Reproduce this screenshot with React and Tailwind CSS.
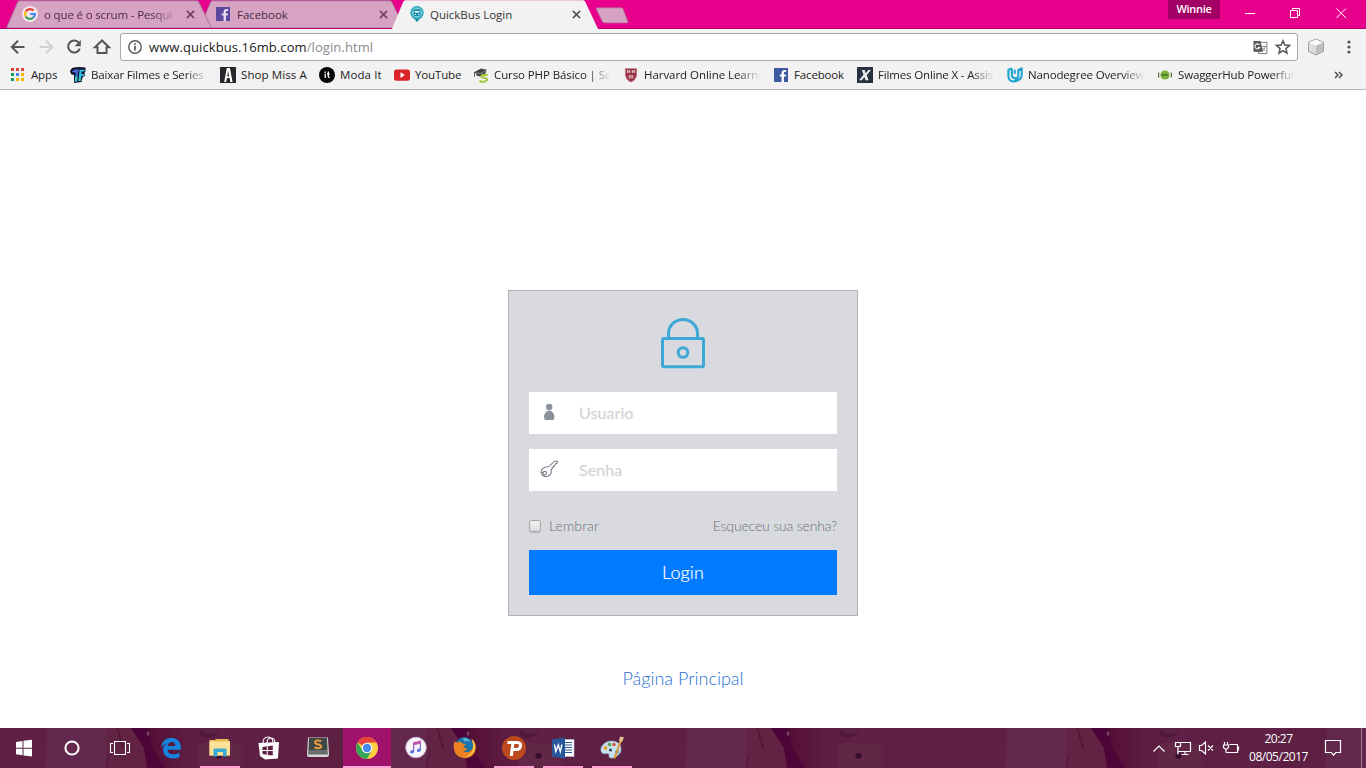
import React from "react";

const UI = "font-['Open_Sans','Noto_Sans',sans-serif]";
const FADE = "[mask-image:linear-gradient(to_right,black_80%,transparent)]";

function GoogleG({ className }) {
  return (
    <svg viewBox="0 0 16 16" className={className}>
      <circle cx="8" cy="8" r="8" fill="#f3e4ee" />
      <g fill="none" strokeWidth="2.1">
        <path d="M11.5 4.6A4.9 4.9 0 0 0 3.7 5.6" stroke="#ea4335" />
        <path d="M3.7 5.6a4.9 4.9 0 0 0 0 4.8" stroke="#fbbc05" />
        <path d="M3.7 10.4a4.9 4.9 0 0 0 7.6 1.2" stroke="#34a853" />
        <path d="M11.3 11.6A4.9 4.9 0 0 0 12.9 8H8.2" stroke="#4285f4" />
      </g>
    </svg>
  );
}

function FacebookIcon({ color = "#3f5ba0", paper = "#fff", className }) {
  return (
    <svg viewBox="0 0 14 14" className={className}>
      <rect width="14" height="14" fill={color} />
      <path d="M7.6 14V8.6H5.8V6.5h1.8V5c0-1.9 1.1-2.9 2.8-2.9h1.7v2h-1.1c-.9 0-1.1.4-1.1 1.1v1.3h2.1l-.3 2.1H9.9V14z" fill={paper} />
    </svg>
  );
}

function BusPin({ className }) {
  return (
    <svg viewBox="0 0 14 16" className={className}>
      <path d="M7 16 2.800 11h8.400z" fill="#13809a" />
      <circle cx="7" cy="6.800" r="6.700" fill="#2aa5bb" />
      <circle cx="7" cy="6.600" r="5.100" fill="#7fd0da" />
      <rect x="3.600" y="3.200" width="6.800" height="6.800" rx="1.200" fill="#168aa3" />
      <path d="M4.600 5h4.800v1.700H4.600z" fill="#d6f5f6" />
      <path d="M4.600 8.500h1.200M8.200 8.500h1.200" stroke="#fff" />
    </svg>
  );
}

function TabShape({ fill, stroke }) {
  return (
    <svg viewBox="0 0 206 28" preserveAspectRatio="none" className="absolute inset-0 h-full w-full">
      <path d="M.5 28 11.7 2Q12.3.8 13.500.8H191Q192.200.8 192.800 2L205.500 28z" fill={fill} stroke={stroke} strokeWidth="1" />
    </svg>
  );
}

function Cross({ color }) {
  return (
    <svg viewBox="0 0 9 9" className="h-[9px] w-[9px] shrink-0">
      <path d="M.9.9 8.1 8.1M8.1.9.9 8.1" stroke={color} strokeWidth="1.6" />
    </svg>
  );
}

function Tab({ active, className, icon, title, titleClass = "" }) {
  return (
    <div className={"relative w-[206px] shrink-0 " + className}>
      <TabShape fill={active ? "#f2f2f2" : "#d6a3c3"} stroke={active ? "#f2f2f2" : "#a9709a"} />
      <div className="relative flex h-[29px] items-center pr-[17px] pb-px pl-[16px]">
        <span className="flex w-[22px] shrink-0">{icon}</span>
        <span className={"flex-1 pt-px text-[11.5px] leading-5 whitespace-nowrap " + (active ? "text-[#333]" : "text-[#4c2d42]") + " " + titleClass}>{title}</span>
        <span className="flex w-[17px] shrink-0 justify-end pt-px"><Cross color={active ? "#555" : "#6e3f5d"} /></span>
      </div>
    </div>
  );
}

function TabStrip() {
  return (
    <div className="flex h-[29px] items-start border-b border-[#b20070] bg-[#e6008c] pl-[6px]">
      <Tab className="z-10 h-7" icon={<GoogleG className="h-4 w-4" />} title="o que é o scrum - Pesqui" titleClass={"tracking-[-0.15px] " + FADE} />
      <Tab className="-ml-[13px] h-7" icon={<FacebookIcon color="#5a4a9d" paper="#eadcf0" className="ml-px h-[14px] w-[14px]" />} title="Facebook" titleClass="tracking-[-0.05px]" />
      <Tab active className="z-20 -ml-[13px] h-[29px]" icon={<BusPin className="ml-[2px] h-4 w-[14px]" />} title="QuickBus Login" titleClass="tracking-[-0.02px]" />
      <svg viewBox="0 0 34 17" className="mt-[7px] -ml-[3px] h-[17px] w-[34px]">
        <path d="M2 .8h24.5q1 0 1.5 1l5 13q.3 1.2-.8 1.2H9.500Q8 16 7.300 14.600L1.300 2Q1 .8 2 .8z" fill="#d6a3c3" stroke="#bb5e98" strokeWidth=".8" />
      </svg>
      <div className="ml-auto flex">
        <div className="h-[19px] w-[52px] bg-[#a20065] text-center text-[11px] leading-[18px] font-semibold tracking-[-0.3px] text-white">Winnie</div>
        <svg viewBox="0 0 146 28" className="h-7 w-[146px]" fill="none" stroke="#fff">
          <path d="M25 13.500h10M70.500 10.500h7v7h-7zM72.500 10.500v-2h7v7h-2M116.500 8.500l9.500 9.500M126 8.500l-9.500 9.500" />
        </svg>
      </div>
    </div>
  );
}

function Toolbar() {
  return (
    <div className="flex h-9 items-center bg-[#f2f2f2]">
      <svg viewBox="0 0 120 36" className="h-9 w-[120px]" fill="none" stroke="#555" strokeWidth="2">
        <path d="M24.500 18H12.500M18 11.700 11.800 18l6.200 6.300" />
        <path d="M39.500 18h12M46 11.700l6.200 6.300-6.200 6.300" stroke="#d0d0d0" />
        <path d="M79 14A6 6 0 1 0 79.800 19.600" />
        <path d="M80.800 11v6.200h-6.200z" fill="#555" stroke="none" />
        <path d="M102 11.500 95 18.300h2.500V24h9v-5.700h2.500z" />
      </svg>
      <div className="flex h-7 w-[1178px] items-center rounded-[3px] border border-[#a8a8a8] bg-white pl-[7px]">
        <svg viewBox="0 0 14 14" className="h-[14px] w-[14px]">
          <circle cx="7" cy="7" r="6.200" fill="none" stroke="#555" strokeWidth="1.400" />
          <path d="M7 6v4.500M7 3.300v1.600" stroke="#555" strokeWidth="1.700" />
        </svg>
        <span className="ml-[7px] pt-px text-[13px] tracking-[0.09px] whitespace-nowrap text-[#222]">www.quickbus.16mb.com<span className="text-[#8b8b8b]">/login.html</span></span>
        <svg viewBox="0 0 16 16" className="ml-auto h-[15px] w-[15px]">
          <rect x="6" y="2.500" width="8.800" height="12" fill="#fff" stroke="#777" />
          <path d="M.5 1h7.300l3 11.500H.5z" fill="#555" />
          <path d="M7 5.300A2.700 2.700 0 1 0 7.200 8H5" fill="none" stroke="#fff" strokeWidth="1.100" />
          <path d="M9.500 7h4.500M11.800 6v1M13.300 7q-1 3-3 4M10.300 8.500q1 2 3 3" fill="none" stroke="#777" strokeWidth=".8" />
        </svg>
        <svg viewBox="0 0 16 16" className="mr-[6px] ml-[7px] h-4 w-4">
          <path d="m8 1.800 1.800 4.300 4.700.4-3.600 3.100 1.100 4.600L8 11.700l-4 2.500 1.100-4.600L1.500 6.500l4.700-.4z" fill="none" stroke="#555" strokeWidth="1.500" />
        </svg>
      </div>
      <svg viewBox="0 0 18 18" className="ml-[9px] h-[18px] w-[18px]">
        <path d="m9 1 7.500 3.300v9L9 17l-7.500-3.700v-9z" fill="#dedede" stroke="#9c9c9c" />
        <path d="m9 1.500 7 3L9 7.800 2 4.500z" fill="#fafafa" />
        <path d="m9 8 7-3.500v8.700L9 16.500z" fill="#bebebe" />
      </svg>
      <svg viewBox="0 0 4 14" className="ml-[22px] h-[14px] w-1" fill="#555">
        <circle cx="2" cy="2" r="1.600" /><circle cx="2" cy="7" r="1.600" /><circle cx="2" cy="12" r="1.600" />
      </svg>
    </div>
  );
}

const ICON = "h-4 w-4 shrink-0";
const icons = {
  apps: (
    <svg viewBox="0 0 16 16" className={ICON}>
      <path d="M1 1h3v3H1zM6 1h3v3H6zM11 1h3v3h-3z" fill="#db4437" />
      <path d="M1 6h3v3H1z" fill="#0f9d58" /><path d="M6 6h3v3H6z" fill="#4285f4" /><path d="M11 6h3v3h-3z" fill="#f4b400" />
      <path d="M1 11h3v3H1z" fill="#0f9d58" /><path d="M6 11h3v3H6zM11 11h3v3h-3z" fill="#f4b400" />
    </svg>
  ),
  tf: (
    <svg viewBox="0 0 16 16" className={ICON}>
      <path d="M2 1Q8-.5 15.500.5v3.800l-1 1.200.5 3-2.500 2L11.500 15 4 16V8L1 7.200 0 4z" fill="#10162f" />
      <path d="M1.500 5Q4 1.500 9 2.500L8 4.500l-1 10H4.800L5.600 5.200z" fill="#4568dc" />
      <path d="M9.500 2.800h5v1.800H11.500v2.500H14v1.800h-2.500L10.500 14H8.500z" fill="#31bddf" />
      <path d="M4.900 13 5.300 9.500h2.100l-.4 5H4.800zM10.800 10.500H9l-.4 3.500h1.900z" fill="#3fd0c4" />
    </svg>
  ),
  miss: (
    <svg viewBox="0 0 16 16" className={ICON}>
      <rect width="16" height="16" fill="#29272d" />
      <path d="m6.800 1-2.600 14h1.900l.9-4h2.700l.6 4h2.300L9.900 1zm1.200 2.500 1.200 6H7.300z" fill="#fff" />
    </svg>
  ),
  it: (
    <svg viewBox="0 0 16 16" className={ICON}>
      <circle cx="8" cy="8" r="8" fill="#050505" />
      <path d="M6.200 6.800V11M6.200 4.500V6M9.300 4.500v5.200q0 .8 1.300.7M8 6.800h2.700" fill="none" stroke="#fff" strokeWidth="1.300" />
    </svg>
  ),
  youtube: (
    <svg viewBox="0 0 16 16" className={ICON}>
      <rect y="2.500" width="16" height="11.300" rx="2.500" fill="#d9252a" />
      <path d="m6.500 5.300 4.300 2.800-4.300 2.800z" fill="#fff" />
    </svg>
  ),
  php: (
    <svg viewBox="0 0 16 16" className={ICON}>
      <path d="m.5 5.500 7.500-4 5.500 1.300L12 7.500 6.500 9.500 3.500 8.500 3 6.500z" fill="#3c4144" />
      <path d="m3 6 5 .5 4.500-2.800" fill="none" stroke="#a6aaac" strokeWidth=".8" />
      <path d="M1.500 5.500v4.500" stroke="#555" strokeWidth=".9" />
      <path d="M14.800 8Q8 7.200 8.300 9.500q.2 1 3 1.200 3.500.5 2.500 2.700-1.500 2.100-7.500.8" fill="none" stroke="#a1c53b" strokeWidth="1.900" />
    </svg>
  ),
  harvard: (
    <svg viewBox="0 0 16 16" className={ICON}>
      <path d="M2.300 1.500h11.400v6.700q-.5 4.500-5.700 7-5.200-2.500-5.700-7z" fill="#9d3044" stroke="#c98d98" strokeWidth=".6" />
      <path d="M4 3.200h3.200v2.600H4zM8.800 3.200H12v2.600H8.800zM5.800 8.300h4.400v3H5.800z" fill="#ded3d4" />
      <path d="M5.600 3.200v2.600M10.400 3.200v2.600M8 8.300v3M5.800 9.800h4.400" stroke="#93404e" strokeWidth=".6" />
    </svg>
  ),
  facebook: <FacebookIcon className="mr-px ml-px h-[14px] w-[14px] shrink-0" />,
  x: (
    <svg viewBox="0 0 16 16" className={ICON}>
      <rect width="16" height="16" fill="#273241" />
      <path d="M4.800 3h3l.8 3.200L11.300 3H14l-4.200 5 1.700 5.200h-3l-1-3.300-2.700 3.300H2l4.500-5.400z" fill="#e5e9ed" />
    </svg>
  ),
  udacity: (
    <svg viewBox="0 0 16 16" className={ICON} fill="none" stroke="#1fa5d4" strokeWidth="2.100" strokeLinejoin="round">
      <path d="M4.800 1.400 1.400 3v6.300q.3 4.500 4.400 5.200 8.600-.5 8.900-6.500V1.400L11.300 3v5q-.1 4-4 6.300" />
      <path d="M4.800 1.400v6.300q.2 3.600 3.600 3.700 1.600 0 2.600-.8M7.800 2.800v4" />
    </svg>
  ),
  swagger: (
    <svg viewBox="0 0 16 16" className={ICON}>
      <circle cx="8" cy="8" r="4.600" fill="#7dae3e" />
      <path d="M5 8h6" stroke="#4a7425" strokeWidth="1.800" strokeDasharray="1.500 .5" />
      <path d="M2 5.500Q.9 8 2 10.500M14 5.500q1.100 2.500 0 5" stroke="#4b6335" strokeWidth="1.100" fill="none" />
    </svg>
  ),
};

const bookmarks = [
  { icon: "apps", text: "Apps", item: "w-[60px]" },
  { icon: "tf", text: "Baixar Filmes e Series", item: "w-[150px]", fade: true },
  { icon: "miss", text: "Shop Miss A", item: "w-[99px] tracking-[0.1px]" },
  { icon: "it", text: "Moda It", item: "w-[75px] tracking-[0.1px]" },
  { icon: "youtube", text: "YouTube", item: "w-[79px]" },
  { icon: "php", text: "Curso PHP Básico | Sch", item: "w-[150px] tracking-[-0.1px]", fade: true },
  { icon: "harvard", text: "Harvard Online Learni", item: "w-[150px] tracking-[-0.05px]", fade: true },
  { icon: "facebook", text: "Facebook", item: "w-[84px]" },
  { icon: "x", text: "Filmes Online X - Assis", item: "w-[150px]", fade: true },
  { icon: "udacity", text: "Nanodegree Overview", item: "w-[150px]", fade: true },
  { icon: "swagger", text: "SwaggerHub Powerful", item: "w-[150px]", fade: true },
];

function Bookmarks() {
  return (
    <div className="flex h-[25px] items-start border-b border-[#b6b4b6] bg-[#f2f2f2] pl-[10px] text-[11.5px] tracking-[-0.15px] text-[#222]">
      {bookmarks.map((b) => (
        <div key={b.text} className={"flex h-5 shrink-0 items-center gap-[5px] " + b.item}>
          {icons[b.icon]}
          <span className={"whitespace-nowrap " + (b.fade ? "w-[117px] " + FADE : "")}>{b.text}</span>
        </div>
      ))}
      <svg viewBox="0 0 9 8" className="mt-[6px] ml-[27px] h-2 w-[9px]" fill="none" stroke="#444" strokeWidth="1.400">
        <path d="M1 1l3 3-3 3M5 1l3 3-3 3" />
      </svg>
    </div>
  );
}

function Field({ icon, label }) {
  return (
    <div className="flex h-[42px] items-center bg-white">
      <span className="flex w-[50px] pb-[2px] pl-[11px]">{icon}</span>
      <span className="text-[16px] tracking-[0.08px] text-[#d6d6d6] [-webkit-text-stroke:0.3px_#d6d6d6]">{label}</span>
    </div>
  );
}

function LoginPage() {
  return (
    <div className="flex flex-1 flex-col items-center bg-white pt-[200px] font-['Lato',sans-serif]">
      <div className="flex h-[326px] w-[350px] flex-col border border-[#aeb2b7] bg-[#d9dae0] px-5 pt-[27px]">
        <svg viewBox="0 0 46 52" className="h-[52px] w-[46px] self-center" fill="none" stroke="#3da8d6" strokeWidth="3">
          <rect x="2.500" y="20.500" width="41" height="28.200" rx="1.500" />
          <path d="M8.500 20v-4.500a14.500 14 0 0 1 29 0V20" />
          <circle cx="23" cy="34.500" r="4.800" />
        </svg>
        <div className="mt-[22px] flex flex-col gap-[15px]">
          <Field
            label="Usuario"
            icon={
              <svg viewBox="0 0 18 18" className="h-[18px] w-[18px]" fill="#8a909c">
                <circle cx="9.200" cy="4" r="3.200" />
                <path d="M9.200 7.600q2.500 0 4.200 2.700 1.700 2.700.8 5.200-.5 1.500-1.800 1.500H6q-1.300 0-1.800-1.500-.9-2.500.8-5.200 1.700-2.700 4.200-2.700z" />
              </svg>
            }
          />
          <Field
            label="Senha"
            icon={
              <svg viewBox="0 0 18 18" className="h-[18px] w-[18px]" fill="none" stroke="#7b818b" strokeWidth="1.100">
                <path d="M17.400 1.200h-2.800L8.500 6.800Q4.500 6.600 2.500 8.800.6 11 1.400 13.700q1.400 3 5 2.800 4-.8 4.800-3.700.2-1.500-.3-2.800l1.200-1.200.1-1.300 1.500-.5-.1-1.300 1.700-.5.100-1.300 1.700-.8z" />
                <path d="M1.500 12.500q1.500 0 2-.8 1.500-.8 2.700.2.800 1.300-.2 2.500-1.500 1-2.600 0-.8-1.200.1-2.400" />
              </svg>
            }
          />
        </div>
        <div className="mt-[23px] flex h-[22px] items-center text-[14px] font-light text-[#6a7176]">
          <span className="mt-[2px] mr-2 h-3 w-3 rounded-[2.500px] border border-[#a5a5a5] bg-gradient-to-b from-[#f1f1f1] to-[#dedede] shadow-[0_1px_1px_#bbb]" />
          <span className="tracking-[0.12px]">Lembrar</span>
          <span className="ml-auto tracking-[-0.16px]">Esqueceu sua senha?</span>
        </div>
        <div className="mt-[14px] flex h-[45px] items-center justify-center bg-[#007aff] text-[18px] font-light tracking-[0.1px] text-white [-webkit-text-stroke:0.2px_#fff]">Login</div>
      </div>
      <div className="mt-[48px] text-[18px] leading-7 font-light text-[#2a6fd2]">Página Principal</div>
    </div>
  );
}

function TaskbarTexture() {
  return (
    <svg className="absolute inset-0 h-full w-full">
      <defs>
        <linearGradient id="cheek" x1="0" x2="1">
          <stop offset="0" stopColor="#4b0838" /><stop offset=".35" stopColor="#561238" /><stop offset=".7" stopColor="#5d1c42" /><stop offset="1" stopColor="#5e2044" />
        </linearGradient>
        <pattern id="photo" width="320" height="40" patternUnits="userSpaceOnUse">
          <rect width="320" height="40" fill="#5e2145" />
          <path d="M0 0h22v40H0zM29 0h16v40H29zM246 0h8v40h-8zM274 0h9v40h-9z" fill="#5b1e3f" opacity=".5" />
          <path d="M47 0h62L106 40H46z" fill="#64284d" />
          <path d="M107 0h27l10 18 3 22h-41z" fill="#612243" />
          <path d="M118 0q2 14 6 20" stroke="#4c1236" fill="none" strokeWidth="1.500" />
          <path d="M106 40q0-8 4-14" stroke="#4c1236" fill="none" />
          <path d="M131 0h80v40h-64L144 20z" fill="url(#cheek)" />
          <path d="M132 0h16q2 22 18 40h-18L144 20z" fill="#48003a" opacity=".6" />
          <path d="M199 2q1 8 9 8 10-2 12-7-4 3-9 2-5 3-12-3z" fill="#4b1437" opacity=".75" />
          <rect x="199" y="15" width="42" height="30" rx="4" fill="#622747" />
          <rect x="215.500" y="25" width="6" height="5.500" rx="2" fill="#390b2d" />
          <rect x="147" y="4" width="2" height="3.500" fill="#7c4468" />
        </pattern>
      </defs>
      <rect width="100%" height="100%" fill="url(#photo)" />
    </svg>
  );
}

const G = "h-6 w-6";
const apps = [
  {
    icon: (
      <svg viewBox="0 0 24 24" className={G} fill="#fff"><path d="M4 6l6.500-1v6.700H4zM11.500 4.800 20 3.700v8h-8.500zM4 12.700h6.500v6.600L4 18.300zM11.500 12.700H20v7.900l-8.500-1.100z" /></svg>
    ),
  },
  { icon: <svg viewBox="0 0 24 24" className={G}><circle cx="12" cy="12" r="6.600" fill="none" stroke="#fff" strokeWidth="2" /></svg> },
  {
    icon: (
      <svg viewBox="0 0 24 24" className={G} fill="none" stroke="#fff" strokeWidth="1.100"><path d="M6.500 5.500h11v13h-11zM5 7.500H2.500v9H5M19 7.500h2.500v9H19" /></svg>
    ),
  },
  {
    wide: true,
    icon: (
      <svg viewBox="0 0 24 24" className={G}>
        <path d="M2 11.500Q3.300 2.300 12 1.800q9.500.4 10 9.500v2.500H8.500q.6 4.500 6 4.500 3.300 0 6-1.600v4.300q-3 1.600-7 1.600-8.700-.5-9.500-8-.1-5 4.500-7.500Q5 8.500 2 11.500zM8.600 10h7.700q0-4-3.800-4-3.400.4-3.900 4z" fill="#1683dc" />
      </svg>
    ),
  },
  {
    wide: true, run: true,
    icon: (
      <svg viewBox="0 0 24 24" className={G}>
        <path d="M1.500 4H7l1-1h12.500v2h1.500v14.500H1.500z" fill="#e9bd56" /><path d="M1.500 5.500H22V19.500H1.500z" fill="#fbe295" />
        <path d="M5.500 12.500h13V20.500H15v-4.500H9.500v4.500h-4z" fill="#36a9d7" />
      </svg>
    ),
  },
  {
    wide: true,
    icon: (
      <svg viewBox="0 0 24 24" className={G}>
        <path d="M6 7Q6 1 11 1t5 6M10 7q0-5 4-5t4 5" fill="none" stroke="#fff" strokeWidth="1.100" />
        <path d="m1.500 7 20.500-1-1 16.500-13 1L3 20z" fill="#fff" />
        <path d="m5.500 11 4.300-.7v3.800H5.500zM10.800 10.200l5-.8v4.700h-5zM5.500 15.100h4.300v3.600L5.500 18.100zM10.800 15.100h5v4.500l-5-.7z" fill="#602044" />
      </svg>
    ),
  },
  {
    wide: true,
    icon: (
      <svg viewBox="0 0 24 24" className={G}>
        <path d="M2 1.500h20l1 17q0 2.500-2 2.500H3q-2 0-2-2.500z" fill="#d5d7d5" /><path d="M3 2h18l.5 12H2.500z" fill="#414744" /><path d="M2.500 14h19l.5 4.500H2z" fill="#6a6f6d" />
        <path d="M15.300 5Q9.500 3.500 9 6.200q0 1.700 3.500 2.300 4 1 2.300 3-2 1.500-6.300 0" fill="none" stroke="#e99b3f" strokeWidth="2" />
      </svg>
    ),
  },
  {
    wide: true, active: true,
    icon: (
      <svg viewBox="0 0 24 24" className={G}>
        <circle cx="12" cy="12" r="11" fill="#ffcd41" />
        <path d="M12 12 2.500 6.500A11 11 0 0 1 21.500 6.500H12z" fill="#e6433b" />
        <path d="M2.500 6.500A11 11 0 0 0 12 23l4.600-8.300-4.600 2-4.500-2.200z" fill="#36a656" />
        <circle cx="12" cy="12" r="5.300" fill="#fff" /><circle cx="12" cy="12" r="4.200" fill="#4489ee" />
      </svg>
    ),
  },
  {
    wide: true,
    icon: (
      <svg viewBox="0 0 24 24" className={G}>
        <defs><linearGradient id="note" x2=".2" y2="1"><stop stopColor="#f2499a" /><stop offset="1" stopColor="#477ce4" /></linearGradient></defs>
        <circle cx="12" cy="11.500" r="10.300" fill="#f8f4fb" stroke="#c6acd2" />
        <path d="m9 6.200 8-1.800v9.300q-.2 2-2.200 2.300-2 0-2-1.500 0-1.800 3-2V7.900l-5.500 1.200v6.200q-.3 2.100-2.300 2.300-2 0-2-1.500 0-1.900 3-2z" fill="url(#note)" />
      </svg>
    ),
  },
  {
    wide: true,
    icon: (
      <svg viewBox="0 0 24 24" className={G}>
        <circle cx="11.500" cy="10" r="9" fill="#1a75ad" />
        <path d="M1.500 5.500Q-.5 12 2.500 17.500q4.500 5.500 11.500 4.500 8-1.500 8.800-10Q23 6 18.500 3q3.500 7-.5 11.500-4 3-8.500.5 4 0 5-2.500-3 .2-4-2l2.500-2Q9 7.500 7 5.500L4.500 6.500z" fill="#eb8120" />
        <path d="M18.500 2.500q5.300 5 3.300 12-3 6-9.500 6 7.500-3 8-9-.2-5-1.800-9z" fill="#f9c343" />
        <path d="M10 2.500q5-1 7 3.500-3-1.500-5.500-.5z" fill="#69b6d6" />
      </svg>
    ),
  },
  {
    wide: true, run: true,
    icon: (
      <svg viewBox="0 0 24 24" className={G}>
        <circle cx="12" cy="12" r="12" fill="#bd491e" />
        <path d="M5.500 6.500H15q4 .2 3.600 3.200-.5 3.800-4 3.800H9.800" fill="none" stroke="#fff" strokeWidth="2.900" />
        <path d="M9.300 8h3l-1.500 12H7.700z" fill="#fff" />
      </svg>
    ),
  },
  {
    wide: true, run: true,
    icon: (
      <svg viewBox="0 0 24 24" className={G}>
        <path d="M12 3.500h11v17H12z" fill="#fff" stroke="#b8c8df" strokeWidth=".6" />
        <path d="M14 6.500h7M14 9h7M14 11.500h7M14 14h7M14 16.500h7" stroke="#29589a" strokeWidth="1.200" />
        <path d="m1 3.500 13-2v21l-13-2z" fill="#29589a" />
        <path d="m3.500 8.500 1.300 7L7.300 9l2 6.500 1.600-7" fill="none" stroke="#fff" strokeWidth="1.400" />
      </svg>
    ),
  },
  {
    wide: true, run: true,
    icon: (
      <svg viewBox="0 0 24 24" className={G}>
        <path d="M1 12Q4 5 12 5q9 .5 9 8 0 5.500-6 8-2 1.500-4 1-2.500-.3-2-2.800Q9.500 17 7 17.500 0 19 1 12z" fill="#c9e1ee" stroke="#8eb3cc" strokeWidth=".7" />
        <circle cx="5.500" cy="12" r="1.900" fill="#e4a22b" /><circle cx="9.500" cy="8.500" r="1.800" fill="#54a351" /><circle cx="14" cy="8.500" r="1.700" fill="#d94e3b" /><circle cx="10.500" cy="14" r="1.500" fill="#243d5b" /><circle cx="17" cy="16" r="1.800" fill="#356eac" />
        <path d="M21 4 14.500 22.500" stroke="#d89b43" strokeWidth="2.200" /><path d="m20 .5 4 1L22 6l-3-1z" fill="#e9c48d" />
      </svg>
    ),
  },
];

function Taskbar() {
  return (
    <div className="relative h-10 w-full overflow-hidden bg-[#5e2144]">
      <TaskbarTexture />
      <div className="relative flex h-full">
        {apps.map((a, i) => (
          <div key={i} className={"flex h-full shrink-0 flex-col items-center " + (a.wide ? "mr-px w-12" : i === 2 ? "mr-[3px] w-12" : "w-12") + (a.active ? " bg-[#a0116b]" : "")}>
            <div className="flex h-[38px] items-center pt-[2px]">{a.icon}</div>
            {(a.run || a.active) && <div className={"h-[2px] bg-[#ffa5d5] " + (a.active ? "w-12" : "w-10")} />}
          </div>
        ))}
        <div className="ml-auto flex items-center text-white">
          <svg viewBox="0 0 92 24" className="h-6 w-[92px]" fill="none" stroke="#fff" strokeWidth="1.200">
            <path d="M1.500 15.500 7 10l5.500 5.500" />
            <path d="M29 6.500h9.500v9H26M23.500 6.500h5v4h-5zM26 10.500v8M33 15.500v3M29.500 18.500h7" />
            <path d="M47.500 9.500h2l4-3.500v12l-4-3.500h-2zM56 9.500l5 5M61 9.500l-5 5" />
            <path d="M77.500 8.500h8v8H74M86.500 10.500v4M72.500 6v3M75.500 6v3M71.500 9h5v2.500l-1.500 1.500h-2L71.500 11.500zM74 13v3.500" />
          </svg>
          <div className="ml-px w-[67px] text-center text-[12px] leading-[18px] tracking-[-0.48px]">
            <div>20:27</div>
            <div>08/05/2017</div>
          </div>
          <svg viewBox="0 0 18 18" className="ml-[12px] h-[18px] w-[18px]" fill="none" stroke="#fff" strokeWidth="1.200">
            <path d="M1.500 1.500h15v12h-4.700L9.500 16l-2.300-2.500H1.500z" />
          </svg>
          <div className="mr-[4px] ml-[19px] h-10 w-px bg-[#a27c93]" />
        </div>
      </div>
    </div>
  );
}

export default function App() {
  return (
    <div className={"flex h-[768px] w-[1366px] flex-col overflow-hidden bg-white " + UI}>
      <TabStrip />
      <Toolbar />
      <Bookmarks />
      <LoginPage />
      <Taskbar />
    </div>
  );
}
